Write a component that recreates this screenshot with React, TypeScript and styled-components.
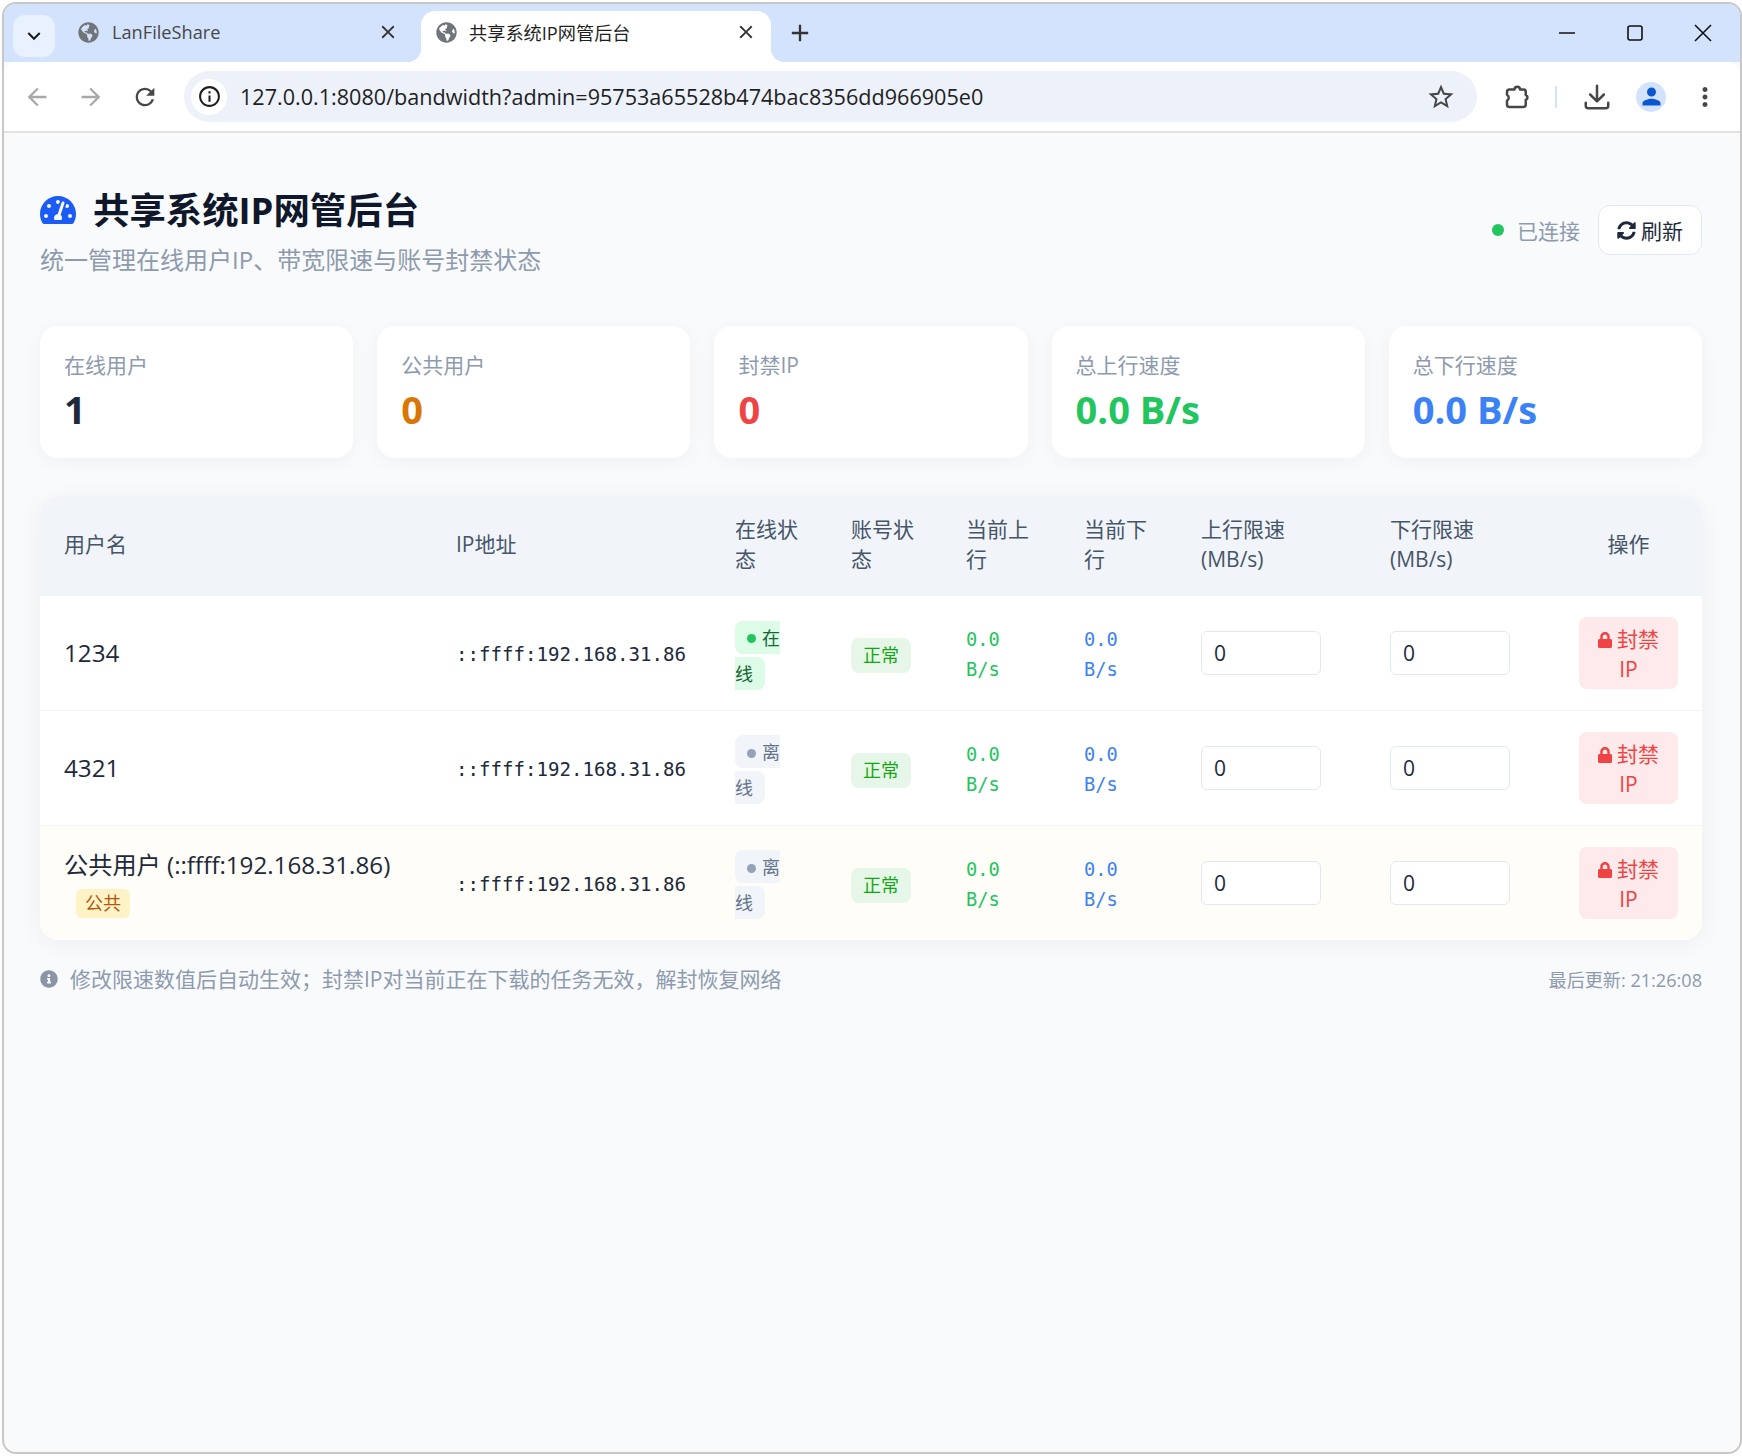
import React from 'react';
import styled, { createGlobalStyle } from 'styled-components';
import { FaGlobeAmericas, FaInfoCircle, FaLock, FaSyncAlt, FaTachometerAlt } from 'react-icons/fa';
import {
  MdAdd,
  MdArrowBack,
  MdArrowForward,
  MdClose,
  MdInfoOutline,
  MdKeyboardArrowDown,
  MdMoreVert,
  MdPerson,
  MdRefresh,
  MdStarBorder,
} from 'react-icons/md';

const SANS = `"Open Sans", "Noto Sans CJK SC", sans-serif`;
const MONO = `"DejaVu Sans Mono", "Noto Sans CJK SC", monospace`;
const MUTED = '#8e9aad';

const GlobalStyle = createGlobalStyle`
  * { box-sizing: border-box; }
  html, body { margin: 0; padding: 0; background: #fff; }
  body { font-family: ${SANS}; }
`;

const Page = styled.div`
  height: 1456px;
  padding: 2px 0 2px 2px;
`;

const Window = styled.div`
  height: 100%;
  border: 2px solid #c8c8c8;
  border-radius: 14px;
  overflow: hidden;
  display: flex;
  flex-direction: column;
  background: #f8fafc;
`;

const TabStrip = styled.div`
  height: 58px;
  flex: none;
  background: #d3e3fd;
  display: flex;
  align-items: flex-end;
  padding-left: 9px;
  position: relative;
`;

const TabSearch = styled.div`
  width: 42px;
  height: 42px;
  margin-bottom: 5px;
  border-radius: 12px;
  background: #e9f0fe;
  display: flex;
  align-items: center;
  justify-content: center;
  color: #1f1f1f;
  font-size: 26px;
`;

const Tab = styled.div<{ $active?: boolean }>`
  width: ${(p) => (p.$active ? '350px' : '358px')};
  height: 51px;
  margin-left: ${(p) => (p.$active ? '0' : '8px')};
  padding: 0 ${(p) => (p.$active ? '14px' : '22px')} 9px 15px;
  display: flex;
  align-items: center;
  gap: ${(p) => (p.$active ? '12px' : '13px')};
  position: relative;
  background: ${(p) => (p.$active ? '#fff' : 'transparent')};
  border-radius: 14px 14px 0 0;
  color: ${(p) => (p.$active ? '#1f1f1f' : '#474747')};
  font-size: 18.2px;

  &::before,
  &::after {
    content: '';
    display: ${(p) => (p.$active ? 'block' : 'none')};
    position: absolute;
    bottom: 0;
    width: 14px;
    height: 14px;
    background: radial-gradient(circle at ${'var(--c)'}, transparent 14px, #fff 14.5px);
  }
  &::before { left: -14px; --c: 0 0; }
  &::after { right: -14px; --c: 100% 0; }
`;

const TabTitle = styled.span`
  flex: 1;
  white-space: nowrap;
`;

const Favicon = styled(FaGlobeAmericas)`
  width: 21px;
  height: 21px;
  color: #70757a;
  flex: none;
`;

const TabClose = styled(MdClose)`
  width: 22px;
  height: 22px;
  color: #333;
  flex: none;
`;

const NewTab = styled(MdAdd)`
  width: 28px;
  height: 28px;
  color: #333;
  margin: 0 0 15px 15px;
`;

const WindowControls = styled.div`
  margin-left: auto;
  height: 100%;
  display: flex;
  align-items: center;
  gap: 44px;
  padding: 0 25px 0 0;
`;

const ControlIcon = styled.svg`
  width: 24px;
  height: 24px;
  fill: none;
  stroke: #111;
  stroke-width: 1.6;
`;

const Toolbar = styled.div`
  height: 72px;
  flex: none;
  background: #fff;
  border-bottom: 2px solid #e2e2e2;
  border-radius: 14px 14px 0 0;
  margin-top: -1px;
  display: flex;
  align-items: center;
  padding: 1px 20px 0 19px;
`;

const NavButton = styled.span<{ $off?: boolean }>`
  width: 54px;
  height: 30px;
  flex: none;
  display: flex;
  align-items: center;
  justify-content: flex-start;
  font-size: 28px;
  color: ${(p) => (p.$off ? '#a8a8a8' : '#474747')};
`;

const Omnibox = styled.div`
  flex: 1;
  height: 51px;
  margin: 0 25px 0 -1px;
  padding: 0 21px 0 7px;
  border-radius: 26px;
  background: #ecf1fa;
  display: flex;
  align-items: center;
`;

const SiteInfo = styled.span`
  width: 36px;
  height: 36px;
  border-radius: 50%;
  background: #fff;
  display: flex;
  align-items: center;
  justify-content: center;
  font-size: 25px;
  color: #1f1f1f;
`;

const UrlText = styled.span`
  flex: 1;
  margin-left: 13px;
  font-size: 21.6px;
  color: #1f1f1f;
  white-space: nowrap;
`;

const ToolIcon = styled.span`
  display: flex;
  flex: none;
  font-size: 30px;
  color: #474747;
`;

const ToolSvg = styled.svg`
  width: 30px;
  height: 30px;
  flex: none;
  fill: none;
  stroke: #474747;
  stroke-width: 2;
  stroke-linecap: round;
  stroke-linejoin: round;
`;

const ToolDivider = styled.span`
  width: 2px;
  height: 22px;
  flex: none;
  background: #d3e3fd;
  margin: 0 25px 0 23px;
`;

const Avatar = styled.span`
  width: 30px;
  height: 30px;
  margin: 0 24px;
  flex: none;
  border-radius: 50%;
  background: #d3e3fd;
  display: flex;
  align-items: center;
  justify-content: center;
  color: #0b57d0;
  font-size: 27px;
`;

const Main = styled.main`
  flex: 1;
  padding: 53px 38px 0 36px;
  color: #1e293b;
`;

const Header = styled.header`
  display: flex;
  align-items: center;
  justify-content: space-between;
  margin-bottom: 48px;
`;

const Title = styled.h1`
  margin: 0;
  font-size: 36.4px;
  line-height: 48px;
  font-weight: 700;
  color: #0f172a;
  display: flex;
  align-items: center;
  gap: 17px;
`;

const TitleIcon = styled(FaTachometerAlt)`
  width: 36px;
  height: 36px;
  color: #1a5cf5;
`;

const Subtitle = styled.p`
  margin: 8px 0 0;
  font-size: 24px;
  line-height: 36px;
  color: ${MUTED};
`;

const HeaderActions = styled.div`
  display: flex;
  align-items: center;
  margin-bottom: 4px;
`;

const ConnDot = styled.span`
  width: 12px;
  height: 12px;
  border-radius: 50%;
  background: #22c55e;
`;

const ConnText = styled.span`
  margin: 0 18px 0 13px;
  font-size: 21px;
  color: ${MUTED};
`;

const RefreshButton = styled.button`
  width: 104px;
  height: 50px;
  border: 1.5px solid #e2e8f0;
  border-radius: 12px;
  background: #fff;
  color: #1e293b;
  font-family: ${SANS};
  font-size: 21px;
  display: flex;
  align-items: center;
  justify-content: center;
  gap: 5px;
  padding: 0;
`;

const RefreshIcon = styled(FaSyncAlt)`
  width: 19px;
  height: 19px;
`;

const StatGrid = styled.section`
  display: grid;
  grid-template-columns: repeat(5, 1fr);
  gap: 24px;
  margin-bottom: 39px;
`;

const StatCard = styled.div`
  height: 132px;
  padding: 24px;
  background: #fff;
  border-radius: 18px;
  box-shadow: 0 4px 20px rgba(15, 23, 42, 0.04);
`;

const StatLabel = styled.div`
  font-size: 21px;
  line-height: 30px;
  color: ${MUTED};
`;

const StatValue = styled.div<{ $color: string }>`
  margin-top: 3px;
  font-size: 38px;
  line-height: 52px;
  font-weight: 700;
  color: ${(p) => p.$color};
`;

const TableCard = styled.section`
  background: #fff;
  border-radius: 18px;
  overflow: hidden;
  box-shadow: 0 4px 24px rgba(15, 23, 42, 0.05);
`;

const Table = styled.table`
  width: 100%;
  border-collapse: collapse;
  table-layout: fixed;
`;

const HeadCell = styled.th<{ $center?: boolean }>`
  height: 99px;
  padding: 0 24px 6px;
  background: #f1f5f9;
  font-size: 21px;
  line-height: 30px;
  font-weight: 400;
  color: #475569;
  text-align: ${(p) => (p.$center ? 'center' : 'left')};
`;

const Row = styled.tr<{ $public?: boolean }>`
  height: 114.6px;
  background: ${(p) => (p.$public ? '#fffdf8' : '#fff')};
  border-bottom: 1px solid #f1f5f9;

  &:last-child {
    border-bottom: none;
  }
`;

const Cell = styled.td`
  padding: 0 24px;
  vertical-align: middle;
  font-size: 24.2px;
  line-height: 36px;
  color: #1e293b;
`;

const PublicTag = styled.span`
  display: inline-block;
  margin-left: 12px;
  padding: 0 9px;
  font-size: 18px;
  line-height: 29px;
  border-radius: 6px;
  background: #fef3c7;
  color: #b45309;
`;

const IpText = styled.span`
  display: block;
  padding-top: 4px;
  font-family: ${MONO};
  font-size: 19.1px;
  line-height: 30px;
  color: #1e293b;
`;

const StatusLine = styled.div`
  padding-top: 4px;
  font-size: 18px;
  line-height: 36px;
`;

const StatusPill = styled.span<{ $online?: boolean }>`
  padding: 4.5px 12px;
  border-radius: 8px;
  background: ${(p) => (p.$online ? '#dcfce7' : '#f1f5f9')};
  color: ${(p) => (p.$online ? '#166534' : '#64748b')};
`;

const StatusDot = styled.span<{ $online?: boolean }>`
  display: inline-block;
  width: 9px;
  height: 9px;
  margin-right: 6px;
  border-radius: 50%;
  vertical-align: 1px;
  background: ${(p) => (p.$online ? '#22c55e' : '#94a3b8')};
`;

const AccountBadge = styled.span`
  display: block;
  width: fit-content;
  margin-top: 5px;
  padding: 0 12px;
  font-size: 18px;
  line-height: 35px;
  border-radius: 8px;
  background: #e6f6e9;
  color: #12a812;
`;

const SpeedText = styled.span<{ $color: string }>`
  display: block;
  padding-top: 4px;
  font-family: ${MONO};
  font-size: 18.7px;
  line-height: 30px;
  color: ${(p) => p.$color};
`;

const LimitInput = styled.input`
  display: block;
  width: 120px;
  height: 44px;
  padding: 0 12px;
  border: 1.5px solid #e2e8f0;
  border-radius: 6px;
  background: #fff;
  color: #1e293b;
  font-family: ${SANS};
  font-size: 21px;
  outline: none;
`;

const BanButton = styled.button`
  display: block;
  width: 99px;
  height: 72px;
  padding: 2px 16px 0;
  border: none;
  border-radius: 8px;
  background: #feeaea;
  color: #ef4444;
  font-family: ${SANS};
  font-size: 21px;
  line-height: 30px;
  text-align: center;
`;

const LockIcon = styled(FaLock)`
  width: 14px;
  height: 16px;
  margin-right: 5px;
  vertical-align: -1px;
`;

const Footer = styled.footer`
  display: flex;
  align-items: center;
  justify-content: space-between;
  margin-top: 24px;
  color: ${MUTED};
`;

const Hint = styled.span`
  display: flex;
  align-items: center;
  gap: 12px;
  font-size: 21px;
  line-height: 30px;
`;

const HintIcon = styled(FaInfoCircle)`
  width: 18px;
  height: 18px;
  color: #8a96a8;
`;

const Updated = styled.span`
  font-size: 18.1px;
`;

type User = { name: string; online: boolean; isPublic?: boolean };

const IP = '::ffff:192.168.31.86';

const USERS: User[] = [
  { name: '1234', online: true },
  { name: '4321', online: false },
  { name: `公共用户 (${IP})`, online: false, isPublic: true },
];

const STATS = [
  { label: '在线用户', value: '1', color: '#1e293b' },
  { label: '公共用户', value: '0', color: '#d97706' },
  { label: '封禁IP', value: '0', color: '#ef4444' },
  { label: '总上行速度', value: '0.0 B/s', color: '#22c55e' },
  { label: '总下行速度', value: '0.0 B/s', color: '#3b82f6' },
];

const COLUMNS = [
  { title: '用户名', width: 392 },
  { title: 'IP地址', width: 279 },
  { title: '在线状态', width: 116 },
  { title: '账号状态', width: 115 },
  { title: '当前上行', width: 118 },
  { title: '当前下行', width: 117 },
  { title: '上行限速 (MB/s)', width: 189 },
  { title: '下行限速 (MB/s)', width: 189 },
  { title: '操作', width: 147 },
];

export default function App() {
  return (
    <Page>
      <GlobalStyle />
      <Window>
        <TabStrip>
          <TabSearch>
            <MdKeyboardArrowDown />
          </TabSearch>
          <Tab>
            <Favicon />
            <TabTitle>LanFileShare</TabTitle>
            <TabClose />
          </Tab>
          <Tab $active>
            <Favicon />
            <TabTitle>共享系统IP网管后台</TabTitle>
            <TabClose />
          </Tab>
          <NewTab />
          <WindowControls>
            <ControlIcon viewBox="0 0 24 24">
              <path d="M4 12h16" />
            </ControlIcon>
            <ControlIcon viewBox="0 0 24 24">
              <rect x="5" y="5" width="14" height="14" rx="2" />
            </ControlIcon>
            <ControlIcon viewBox="0 0 24 24">
              <path d="M4 4l16 16M20 4L4 20" />
            </ControlIcon>
          </WindowControls>
        </TabStrip>
        <Toolbar>
          <NavButton $off>
            <MdArrowBack />
          </NavButton>
          <NavButton $off>
            <MdArrowForward />
          </NavButton>
          <NavButton>
            <MdRefresh />
          </NavButton>
          <Omnibox>
            <SiteInfo>
              <MdInfoOutline />
            </SiteInfo>
            <UrlText>127.0.0.1:8080/bandwidth?admin=95753a65528b474bac8356dd966905e0</UrlText>
            <ToolIcon>
              <MdStarBorder />
            </ToolIcon>
          </Omnibox>
          <ToolSvg viewBox="0 0 24 24">
            <path d="M6 6h4a2.2 2.2 0 0 1 4.4 0H17a2 2 0 0 1 2 2v2.4a2 2 0 0 1 0 3.8V18a2 2 0 0 1-2 2H6a2 2 0 0 1-2-2v-3.2a2.6 2.6 0 0 0 0-4.6V8a2 2 0 0 1 2-2z" />
          </ToolSvg>
          <ToolDivider />
          <ToolSvg viewBox="0 0 24 24">
            <path d="M12 3v12M6.5 10l5.5 5.5 5.5-5.5M3 16.5V19a2 2 0 0 0 2 2h14a2 2 0 0 0 2-2v-2.5" />
          </ToolSvg>
          <Avatar>
            <MdPerson />
          </Avatar>
          <ToolIcon>
            <MdMoreVert />
          </ToolIcon>
        </Toolbar>
        <Main>
          <Header>
            <div>
              <Title>
                <TitleIcon />
                共享系统IP网管后台
              </Title>
              <Subtitle>统一管理在线用户IP、带宽限速与账号封禁状态</Subtitle>
            </div>
            <HeaderActions>
              <ConnDot />
              <ConnText>已连接</ConnText>
              <RefreshButton>
                <RefreshIcon />
                刷新
              </RefreshButton>
            </HeaderActions>
          </Header>
          <StatGrid>
            {STATS.map((s) => (
              <StatCard key={s.label}>
                <StatLabel>{s.label}</StatLabel>
                <StatValue $color={s.color}>{s.value}</StatValue>
              </StatCard>
            ))}
          </StatGrid>
          <TableCard>
            <Table>
              <colgroup>
                {COLUMNS.map((c) => (
                  <col key={c.title} width={c.width} />
                ))}
              </colgroup>
              <thead>
                <tr>
                  {COLUMNS.map((c) => (
                    <HeadCell key={c.title} $center={c.title === '操作'}>
                      {c.title}
                    </HeadCell>
                  ))}
                </tr>
              </thead>
              <tbody>
                {USERS.map((u) => (
                  <Row key={u.name} $public={u.isPublic}>
                    <Cell>
                      {u.name}
                      {u.isPublic && <PublicTag>公共</PublicTag>}
                    </Cell>
                    <Cell>
                      <IpText>{IP}</IpText>
                    </Cell>
                    <Cell>
                      <StatusLine>
                        <StatusPill $online={u.online}>
                          <StatusDot $online={u.online} />
                          {u.online ? '在线' : '离线'}
                        </StatusPill>
                      </StatusLine>
                    </Cell>
                    <Cell>
                      <AccountBadge>正常</AccountBadge>
                    </Cell>
                    <Cell>
                      <SpeedText $color="#22c55e">0.0 B/s</SpeedText>
                    </Cell>
                    <Cell>
                      <SpeedText $color="#3b82f6">0.0 B/s</SpeedText>
                    </Cell>
                    <Cell>
                      <LimitInput defaultValue="0" />
                    </Cell>
                    <Cell>
                      <LimitInput defaultValue="0" />
                    </Cell>
                    <Cell>
                      <BanButton>
                        <LockIcon />
                        封禁 IP
                      </BanButton>
                    </Cell>
                  </Row>
                ))}
              </tbody>
            </Table>
          </TableCard>
          <Footer>
            <Hint>
              <HintIcon />
              修改限速数值后自动生效；封禁IP对当前正在下载的任务无效，解封恢复网络
            </Hint>
            <Updated>最后更新: 21:26:08</Updated>
          </Footer>
        </Main>
      </Window>
    </Page>
  );
}
